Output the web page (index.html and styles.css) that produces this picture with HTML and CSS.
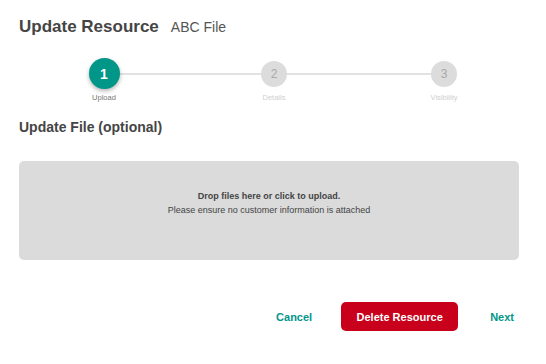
FILE: index.html
```html
<!DOCTYPE html>
<html>
<head>
<meta charset="utf-8">
<link rel="stylesheet" href="styles.css">
</head>
<body>
<div class="dialog">
  <div class="header">
    <h1 class="title">Update Resource</h1>
    <span class="subtitle">ABC File</span>
  </div>
  <div class="stepper">
    <div class="step active">
      <div class="dot-wrap"><span class="dot">1</span></div>
      <span class="label">Upload</span>
    </div>
    <div class="step">
      <div class="dot-wrap"><span class="dot">2</span></div>
      <span class="label">Details</span>
    </div>
    <div class="step">
      <div class="dot-wrap"><span class="dot">3</span></div>
      <span class="label">Visibility</span>
    </div>
  </div>
  <h2 class="section-title">Update File (optional)</h2>
  <div class="dropzone">
    <div class="drop-main">Drop files here or click to upload.</div>
    <div class="drop-sub">Please ensure no customer information is attached</div>
  </div>
  <div class="actions">
    <button class="btn-text">Cancel</button>
    <button class="btn-danger">Delete Resource</button>
    <button class="btn-text btn-next">Next</button>
  </div>
</div>
</body>
</html>
```
FILE: styles.css
```css
* { box-sizing: border-box; }
html, body { margin: 0; padding: 0; background: #fff; }
body { font-family: "Liberation Sans", Arial, sans-serif; color: #444; }
.dialog { width: 546px; padding: 17px 27px 0 19px; }
.header { display: flex; align-items: baseline; gap: 12px; height: 20px; }
.title { margin: 0; font-size: 17px; line-height: 20px; font-weight: 700; color: #454545; }
.subtitle { font-size: 14px; line-height: 20px; color: #555; }
.stepper { position: relative; display: grid; grid-template-columns: 170px 170px 170px; margin-top: 21px; }
.stepper::before { content: ""; position: absolute; left: 85px; width: 340px; top: 14.5px; height: 2px; background: #e2e2e2; }
.step { display: flex; flex-direction: column; align-items: center; position: relative; }
.dot-wrap { height: 31px; display: flex; align-items: center; justify-content: center; }
.dot { width: 26px; height: 26px; border-radius: 50%; background: #dcdcdc; color: #a8a8a8; font-size: 12px; display: flex; align-items: center; justify-content: center; }
.step.active .dot { width: 31px; height: 31px; background: #009688; color: #fff; font-weight: 700; font-size: 14px; box-shadow: 0 2px 4px rgba(0,0,0,0.3); }
.label { margin-top: 4px; font-size: 7.5px; line-height: 10px; color: #cfcfcf; }
.step.active .label { color: #777; }
.section-title { margin: 16px 0 0; font-size: 14px; line-height: 17px; font-weight: 700; color: #454545; }
.dropzone { margin-top: 25px; width: 500px; height: 99px; background: #dbdbdb; border-radius: 5px; padding-top: 28px; text-align: center; color: #444; }
.drop-main { font-size: 9px; font-weight: 700; line-height: 14px; }
.drop-sub { font-size: 9px; line-height: 14px; }
.actions { display: flex; justify-content: flex-end; align-items: center; gap: 24px; margin-top: 42px; width: 500px; }
button { font-family: inherit; border: 0; cursor: pointer; }
.btn-text { background: none; color: #00968a; font-size: 11px; font-weight: 700; padding: 0 5px; height: 29px; }
.btn-next { margin-left: 3px; }
.btn-danger { background: #c8001b; color: #fff; font-size: 11px; font-weight: 700; height: 29px; width: 117px; padding: 0; border-radius: 5px; }
```
